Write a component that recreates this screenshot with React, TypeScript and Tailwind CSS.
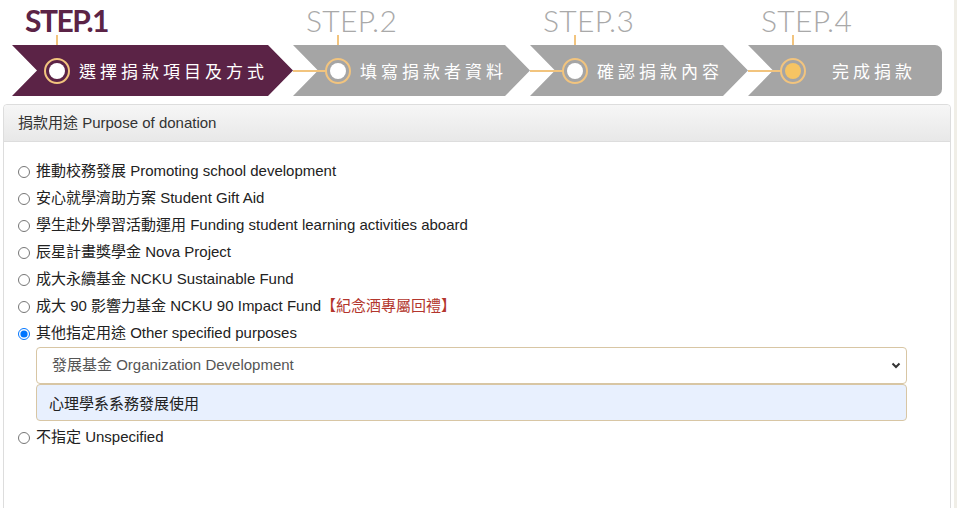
import React from "react";

const font = "font-['Liberation_Sans','Noto_Sans_CJK_TC',sans-serif]";

type Step = {
  label: string;
  text: string;
  width: string;
  active?: boolean;
  last?: boolean;
};

const steps: Step[] = [
  { label: "STEP.1", text: "選擇捐款項目及方式", width: "w-[281px]", active: true },
  { label: "STEP.2", text: "填寫捐款者資料", width: "w-[237px]" },
  { label: "STEP.3", text: "確認捐款內容", width: "w-[218px]" },
  { label: "STEP.4", text: "完成捐款", width: "w-[194px]", last: true },
];

const purposes = [
  "推動校務發展 Promoting school development",
  "安心就學濟助方案 Student Gift Aid",
  "學生赴外學習活動運用 Funding student learning activities aboard",
  "辰星計畫獎學金 Nova Project",
  "成大永續基金 NCKU Sustainable Fund",
];

function StepItem({ step, index }: { step: Step; index: number }) {
  return (
    <div className={`relative flex flex-col ${step.width}`}>
      {/* label */}
      <div
        className={`h-[45px] pl-[13px] pt-[5px] text-[30px] leading-none font-['Lato',sans-serif] ${
          step.active ? "font-bold text-[#5b2346] tracking-[-1.5px]" : "font-light text-[#a9a9a9] tracking-[0.3px]"
        }`}
      >
        {step.label}
      </div>
      {/* vertical connector */}
      <div className="absolute left-[44px] top-[35px] h-[24px] w-[2px] bg-[#f2c47e]" />

      <div className="relative flex h-[51px] items-center">
        <div
          className={
            step.last
              ? "absolute inset-0 rounded-r-[7px] bg-[#a5a5a5] [clip-path:polygon(0_0,100%_0,100%_100%,0_100%,25px_50%)]"
              : step.active
              ? "absolute inset-0 bg-[#5b2346] [clip-path:polygon(0_0,calc(100%_-_25px)_0,100%_50%,calc(100%_-_25px)_100%,0_100%,25px_50%)]"
              : "absolute inset-0 bg-[#a5a5a5] [clip-path:polygon(0_0,calc(100%_-_25px)_0,100%_50%,calc(100%_-_25px)_100%,0_100%,25px_50%)]"
          }
        />
        {index > 0 && <div className="absolute left-0 top-[25px] h-[2px] w-[34px] bg-[#f2c47e]" />}
        <div className="relative ml-[32px] flex h-[26px] w-[26px] items-center justify-center rounded-full border-2 border-[#f2c47e]">
          <div className={`h-[16px] w-[16px] rounded-full ${step.last ? "bg-[#f6c463]" : "bg-white"}`} />
        </div>
        <span
          className={`relative text-[17px] tracking-[4px] text-white font-['Noto_Sans_CJK_TC',sans-serif] ${
            step.last ? "flex-1 text-center" : "ml-[9px]"
          }`}
        >
          {step.text}
        </span>
      </div>
    </div>
  );
}

function RadioRow({ children, checked }: { children: React.ReactNode; checked?: boolean }) {
  return (
    <label className="flex h-[27px] items-center gap-[6px] text-[15px] text-[#222]">
      <input type="radio" name="purpose" defaultChecked={checked} className="m-0 h-[12px] w-[12px]" />
      <span>{children}</span>
    </label>
  );
}

export default function App() {
  return (
    <div className={`flex h-[508px] overflow-hidden bg-white ${font}`}>
      <div className="flex-1 px-[3px]">
        {/* Steps */}
        <div className="flex pl-[9px]">
          {steps.map((s, i) => (
            <StepItem key={s.label} step={s} index={i} />
          ))}
        </div>

        {/* Panel */}
        <div className="mt-[8px] h-[500px] rounded-[4px] border border-[#dddddd]">
          <div className="flex h-[37px] items-center rounded-t-[4px] border-b border-[#dddddd] bg-linear-to-b from-[#f6f6f6] to-[#e8e8e8] pl-[14px] text-[15px] text-[#333]">
            捐款用途 Purpose of donation
          </div>
          <div className="pl-[14px] pr-[43px] pt-[16px]">
            {purposes.map((p) => (
              <RadioRow key={p}>{p}</RadioRow>
            ))}
            <RadioRow>
              成大 90 影響力基金 NCKU 90 Impact Fund
              <span className="text-[#b3362d]">【紀念酒專屬回禮】</span>
            </RadioRow>
            <RadioRow checked>其他指定用途 Other specified purposes</RadioRow>

            <div className="ml-[18px]">
              <div className="relative">
                <select className="h-[37px] w-full appearance-none rounded-[4px] border border-[#d8c6a4] bg-white pl-[15px] text-[15px] text-[#555]">
                  <option>發展基金 Organization Development</option>
                </select>
                <svg
                  className="pointer-events-none absolute right-[6px] top-[15px]"
                  width="10"
                  height="7"
                  viewBox="0 0 10 7"
                >
                  <path d="M1.5 1.5 L5 5 L8.5 1.5" fill="none" stroke="#333" strokeWidth="2" />
                </svg>
              </div>
              <input
                readOnly
                defaultValue="心理學系系務發展使用"
                className="block h-[37px] w-full rounded-[4px] border border-[#d8c6a4] bg-[#e8f0fe] pl-[12px] text-[15px] text-[#222] outline-none"
              />
            </div>

            <div className="mt-[3px]">
              <RadioRow>不指定 Unspecified</RadioRow>
            </div>
          </div>
        </div>
      </div>
      <div className="w-[3px] bg-[#f0eee7]" />
    </div>
  );
}
